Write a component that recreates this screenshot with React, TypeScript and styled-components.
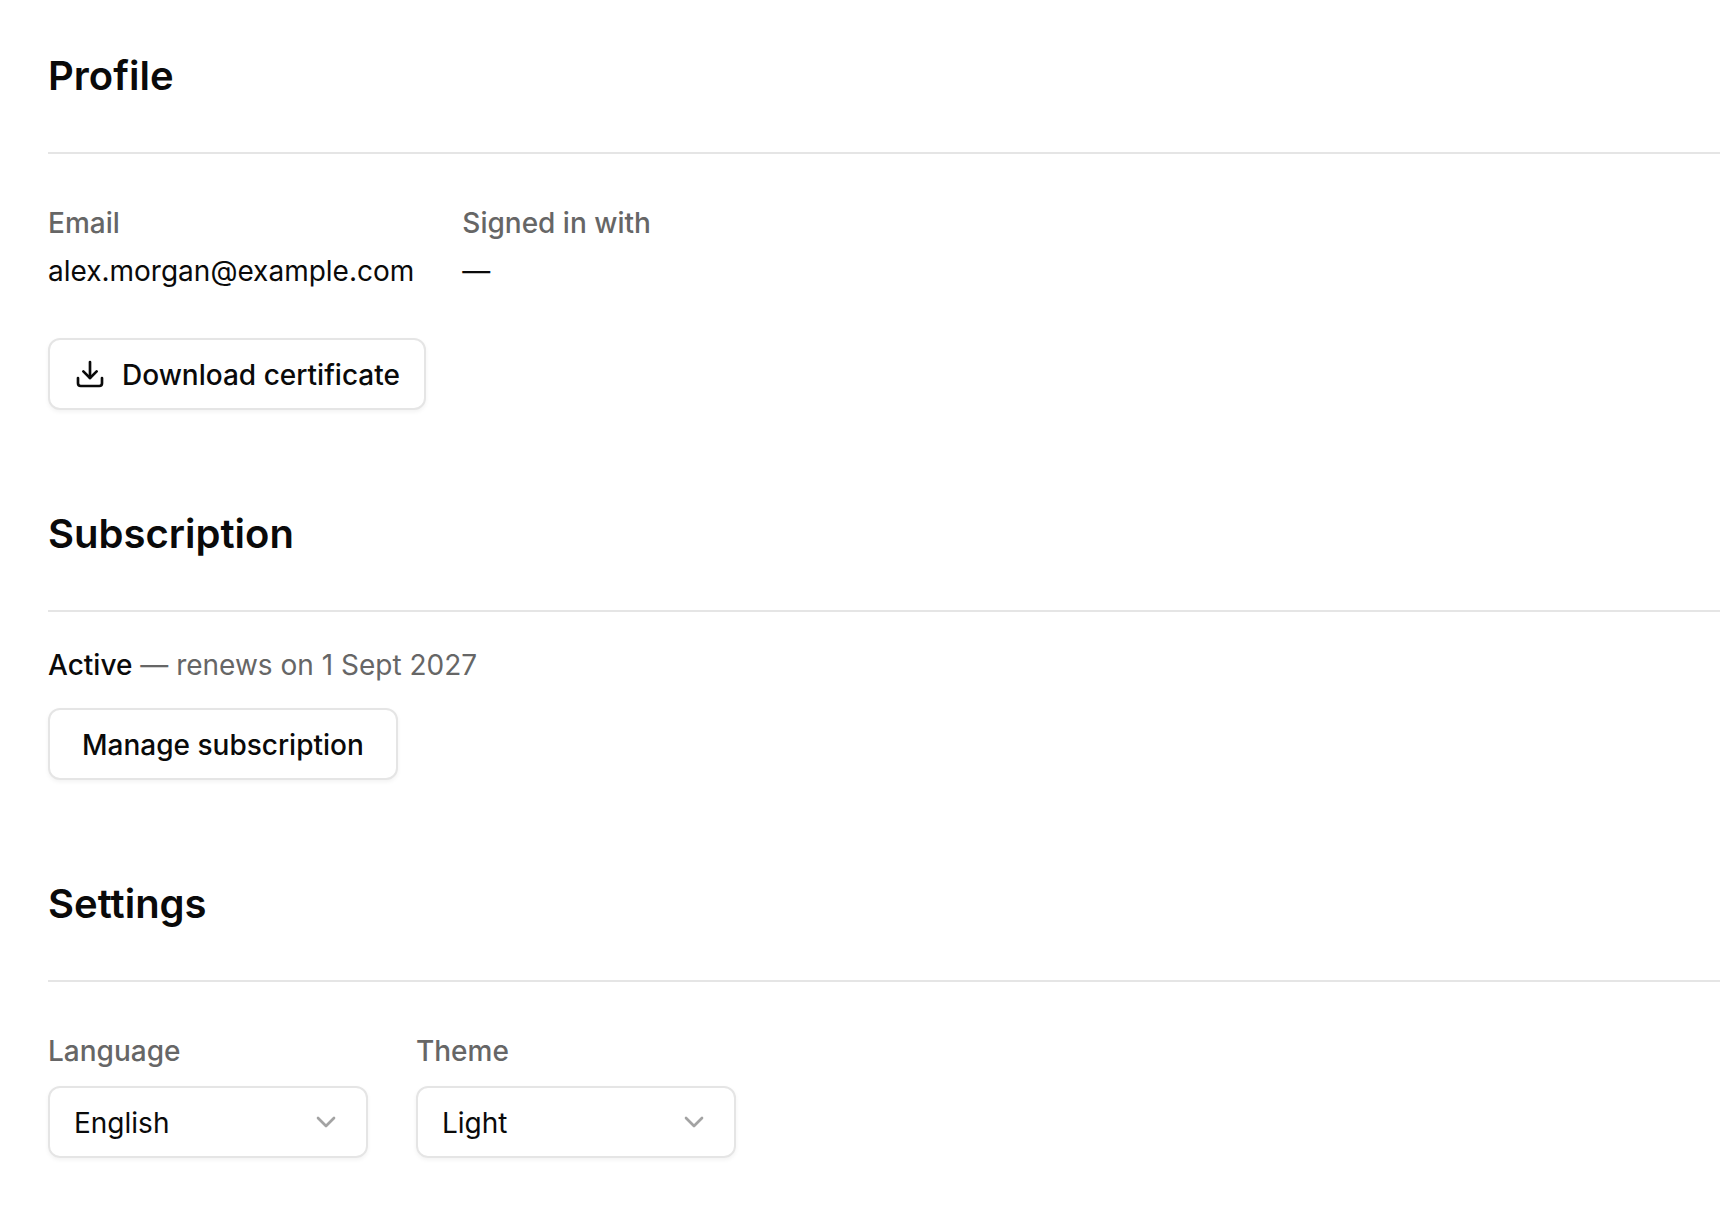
import styled, { createGlobalStyle, css } from "styled-components";
import { ChevronDown, Download } from "lucide-react";

const GlobalStyle = createGlobalStyle`
    * {
        box-sizing: border-box;
    }
    body {
        margin: 0;
        background: #fff;
        color: #0a0a0a;
        font-family: Inter, "Liberation Sans", sans-serif;
        font-size: 28px;
    }
`;

// 40px tall line with the baseline one pixel lower than plain line-height gives
const textLine = css`
    display: block;
    padding-top: 2px;
    line-height: 38px;
`;

const Page = styled.div`
    padding: 48px 0 56px 48px;
    min-height: 1214px;
    overflow: hidden;
`;

const Section = styled.section`
    margin-bottom: 96px;
`;

const Title = styled.h2`
    margin: 0;
    padding-bottom: 48px;
    border-bottom: 2px solid #e5e5e5;
    font-size: 40px;
    line-height: 56px;
    font-weight: 600;
`;

const Fields = styled.div`
    display: flex;
    gap: 48px;
    margin-top: 48px;
`;

const Label = styled.div`
    ${textLine}
    color: #666;
    font-weight: 500;
`;

const Value = styled.div`
    ${textLine}
    margin-top: 8px;
`;

const Button = styled.button<{ $wide?: boolean }>`
    display: inline-flex;
    align-items: center;
    gap: 16px;
    height: 72px;
    padding: 0 ${(props) => (props.$wide ? 32 : 24)}px;
    margin-top: ${(props) => (props.$wide ? 24 : 48)}px;
    border: 2px solid #e5e5e5;
    border-radius: 12px;
    background: #fff;
    box-shadow: 0 2px 4px rgba(0, 0, 0, 0.05);
    color: #0a0a0a;
    font: 500 28px/40px Inter, "Liberation Sans", sans-serif;
`;

const ControlText = styled.span`
    ${textLine}
`;

const Status = styled.div`
    ${textLine}
    margin-top: 32px;
    color: #666;
`;

const Strong = styled.span`
    color: #0a0a0a;
    font-weight: 500;
`;

const SelectGroup = styled.div`
    width: 320px;
`;

const Select = styled.div`
    display: flex;
    align-items: center;
    justify-content: space-between;
    height: 72px;
    margin-top: 16px;
    padding: 0 24px;
    border: 2px solid #e5e5e5;
    border-radius: 12px;
    box-shadow: 0 2px 4px rgba(0, 0, 0, 0.05);
    svg {
        color: #a3a3a3;
    }
`;

function App() {
    return (
        <Page>
            <GlobalStyle />
            <Section>
                <Title>Profile</Title>
                <Fields>
                    <div>
                        <Label>Email</Label>
                        <Value>alex.morgan@example.com</Value>
                    </div>
                    <div>
                        <Label>Signed in with</Label>
                        <Value>—</Value>
                    </div>
                </Fields>
                <Button>
                    <Download size={32} strokeWidth={2} />
                    <ControlText>Download certificate</ControlText>
                </Button>
            </Section>
            <Section>
                <Title>Subscription</Title>
                <Status>
                    <Strong>Active</Strong> — renews on 1 Sept 2027
                </Status>
                <Button $wide>
                    <ControlText>Manage subscription</ControlText>
                </Button>
            </Section>
            <section>
                <Title>Settings</Title>
                <Fields>
                    <SelectGroup>
                        <Label>Language</Label>
                        <Select>
                            <ControlText>English</ControlText>
                            <ChevronDown size={32} strokeWidth={2} />
                        </Select>
                    </SelectGroup>
                    <SelectGroup>
                        <Label>Theme</Label>
                        <Select>
                            <ControlText>Light</ControlText>
                            <ChevronDown size={32} strokeWidth={2} />
                        </Select>
                    </SelectGroup>
                </Fields>
            </section>
        </Page>
    );
}

export default App;
